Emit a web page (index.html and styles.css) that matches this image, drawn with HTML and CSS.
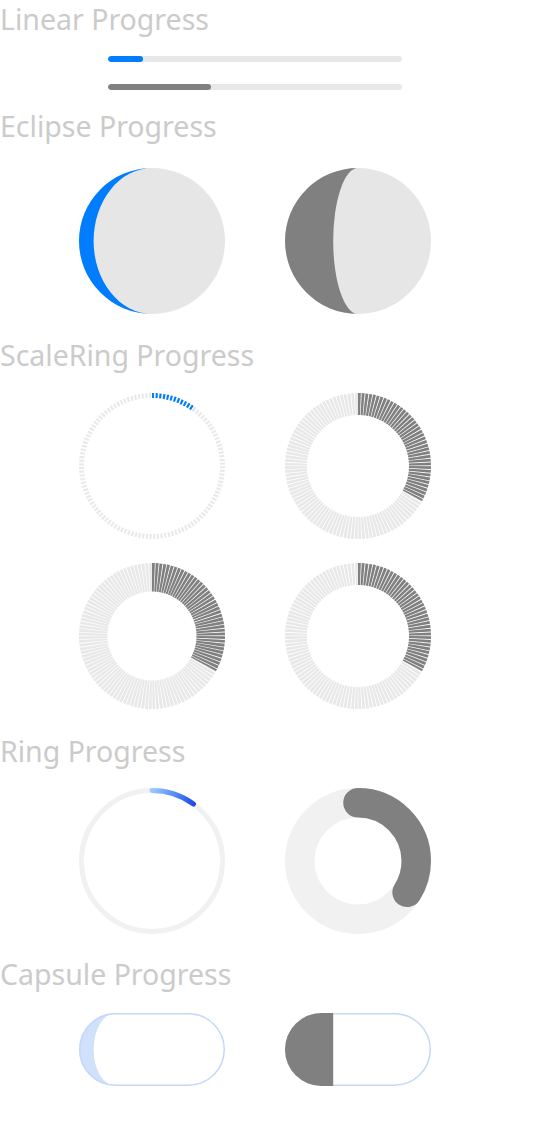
FILE: index.html
```html
<!DOCTYPE html>
<html>
<head>
<meta charset="utf-8">
<link rel="stylesheet" href="styles.css">
</head>
<body>
<div class="page">
  <h2 class="title">Linear Progress</h2>
  <div class="linear-list">
    <div class="linear"><div class="linear-fill blue" style="width:12%"></div></div>
    <div class="linear"><div class="linear-fill gray" style="width:35%"></div></div>
  </div>

  <h2 class="title t-eclipse">Eclipse Progress</h2>
  <div class="row r-eclipse">
    <svg class="dial" viewBox="0 0 146 146" width="146" height="146">
      <circle cx="73" cy="73" r="73" fill="#e6e6e6"/>
      <path d="M73 0 A73 73 0 0 0 73 146 A58.4 73 0 0 1 73 0 Z" fill="#007dff"/>
    </svg>
    <svg class="dial" viewBox="0 0 146 146" width="146" height="146">
      <circle cx="73" cy="73" r="73" fill="#e6e6e6"/>
      <path d="M73 0 A73 73 0 0 0 73 146 A24.8 73 0 0 1 73 0 Z" fill="#808080"/>
    </svg>
  </div>

  <h2 class="title t-scale">ScaleRing Progress</h2>
  <div class="scale-grid">
    <div class="row">
      <svg class="dial" viewBox="0 0 146 146" width="146" height="146">
        <defs>
          <clipPath id="pie10"><path d="M73 73 L73 -7 A80 80 0 0 1 120.02 8.28 Z"/></clipPath>
        </defs>
        <g transform="rotate(-90 73 73)">
          <circle cx="73" cy="73" r="70.5" fill="none" stroke="#e9e9e9" stroke-width="5" stroke-dasharray="2.1 1.5914"/>
        </g>
        <g clip-path="url(#pie10)">
          <g transform="rotate(-90 73 73)">
            <circle cx="73" cy="73" r="70.5" fill="none" stroke="#007dff" stroke-width="5" stroke-dasharray="2.1 1.5914"/>
          </g>
        </g>
      </svg>
      <svg class="dial" viewBox="0 0 146 146" width="146" height="146">
        <defs>
          <clipPath id="pie33a"><path d="M73 73 L73 -7 A80 80 0 0 1 143.1 111.54 Z"/></clipPath>
        </defs>
        <g transform="rotate(-90 73 73)">
          <circle cx="73" cy="73" r="62" fill="none" stroke="#e8e8e8" stroke-width="22" stroke-dasharray="2.45 0.7963"/>
        </g>
        <g clip-path="url(#pie33a)">
          <g transform="rotate(-90 73 73)">
            <circle cx="73" cy="73" r="62" fill="none" stroke="#808080" stroke-width="22" stroke-dasharray="2.45 0.7963"/>
          </g>
        </g>
      </svg>
    </div>
    <div class="row">
      <svg class="dial" viewBox="0 0 146 146" width="146" height="146">
        <defs>
          <clipPath id="pie33b"><path d="M73 73 L73 -7 A80 80 0 0 1 143.1 111.54 Z"/></clipPath>
        </defs>
        <g transform="rotate(-90 73 73)">
          <circle cx="73" cy="73" r="58.75" fill="none" stroke="#e8e8e8" stroke-width="28.5" stroke-dasharray="2.35 0.7261"/>
        </g>
        <g clip-path="url(#pie33b)">
          <g transform="rotate(-90 73 73)">
            <circle cx="73" cy="73" r="58.75" fill="none" stroke="#808080" stroke-width="28.5" stroke-dasharray="2.35 0.7261"/>
          </g>
        </g>
      </svg>
      <svg class="dial" viewBox="0 0 146 146" width="146" height="146">
        <defs>
          <clipPath id="pie33c"><path d="M73 73 L73 -7 A80 80 0 0 1 143.1 111.54 Z"/></clipPath>
        </defs>
        <g transform="rotate(-90 73 73)">
          <circle cx="73" cy="73" r="62" fill="none" stroke="#e8e8e8" stroke-width="22" stroke-dasharray="2.45 0.7963"/>
        </g>
        <g clip-path="url(#pie33c)">
          <g transform="rotate(-90 73 73)">
            <circle cx="73" cy="73" r="62" fill="none" stroke="#808080" stroke-width="22" stroke-dasharray="2.45 0.7963"/>
          </g>
        </g>
      </svg>
    </div>
  </div>

  <h2 class="title t-ring">Ring Progress</h2>
  <div class="row r-ring">
    <svg class="dial" viewBox="0 0 146 146" width="146" height="146">
      <defs>
        <linearGradient id="ringGrad" gradientUnits="userSpaceOnUse" x1="72" y1="2" x2="116" y2="17">
          <stop offset="0" stop-color="#9ccbff"/>
          <stop offset="0.55" stop-color="#4d88f7"/>
          <stop offset="1" stop-color="#1c44e4"/>
        </linearGradient>
      </defs>
      <circle cx="73" cy="73" r="70.5" fill="none" stroke="#f1f1f1" stroke-width="5"/>
      <path d="M73 2.5 A70.5 70.5 0 0 1 114.44 15.97" fill="none" stroke="url(#ringGrad)" stroke-width="5" stroke-linecap="round"/>
    </svg>
    <svg class="dial" viewBox="0 0 146 146" width="146" height="146">
      <circle cx="73" cy="73" r="58.25" fill="none" stroke="#f1f1f1" stroke-width="29.5"/>
      <g transform="rotate(-90 73 73)">
        <circle cx="73" cy="73" r="58.25" fill="none" stroke="#808080" stroke-width="29.5" stroke-linecap="round" stroke-dasharray="124.4 500"/>
      </g>
    </svg>
  </div>

  <h2 class="title t-capsule">Capsule Progress</h2>
  <div class="row r-capsule">
    <svg class="capsule" viewBox="0 0 146 73" width="146" height="73">
      <rect x="0" y="0" width="146" height="73" rx="36.5" fill="#ffffff"/>
      <path d="M36.5 0 A36.5 36.5 0 0 0 36.5 73 A21.9 36.5 0 0 1 36.5 0 Z" fill="#d0e1fc"/>
      <rect x="0.75" y="0.75" width="144.5" height="71.5" rx="35.75" fill="none" stroke="#c5d8f9" stroke-width="1.5"/>
    </svg>
    <svg class="capsule" viewBox="0 0 146 73" width="146" height="73">
      <rect x="0.75" y="0.75" width="144.5" height="71.5" rx="35.75" fill="#ffffff" stroke="#c5d8f9" stroke-width="1.5"/>
      <path d="M36.5 0 L48.2 0 L48.2 73 L36.5 73 A36.5 36.5 0 0 1 36.5 0 Z" fill="#808080"/>
    </svg>
  </div>
</div>
</body>
</html>
```

FILE: styles.css
```css
html, body {
  margin: 0;
  padding: 0;
  background: #ffffff;
}

.page {
  display: flex;
  flex-direction: column;
  font-family: "Noto Sans", "Open Sans", sans-serif;
}

.title {
  margin: 0;
  font-size: 28.5px;
  line-height: 38px;
  font-weight: 400;
  color: #cbcbcb;
  white-space: nowrap;
}

.linear-list {
  display: flex;
  flex-direction: column;
  gap: 22px;
  margin-top: 18px;
  padding-left: 108px;
}

.linear {
  width: 294px;
  height: 6px;
  border-radius: 3px;
  background: #e8e8e8;
  overflow: hidden;
}

.linear-fill {
  height: 100%;
  border-radius: 3px;
}

.linear-fill.blue { background: #007dff; }
.linear-fill.gray { background: #808080; }

.row {
  display: flex;
  gap: 60px;
  padding-left: 79px;
}

.dial, .capsule {
  display: block;
  flex: none;
}

.t-eclipse { margin-top: 17px; }
.r-eclipse { margin-top: 23px; }

.t-scale { margin-top: 22px; }
.scale-grid {
  display: flex;
  flex-direction: column;
  gap: 24px;
  margin-top: 19px;
}

.t-ring { margin-top: 23px; }
.r-ring { margin-top: 18px; }

.t-capsule { margin-top: 21px; }
.r-capsule { margin-top: 20px; }
```
